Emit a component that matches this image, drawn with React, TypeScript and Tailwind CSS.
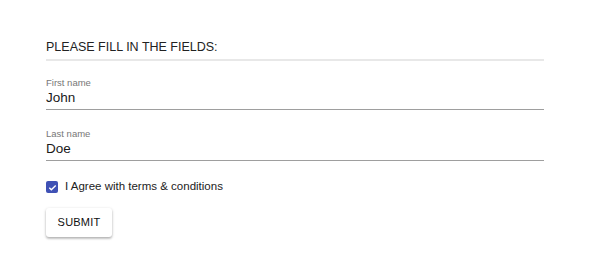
import { useState } from "react";

export default function App() {
  const [first, setFirst] = useState("John");
  const [last, setLast] = useState("Doe");
  const [agree, setAgree] = useState(true);

  return (
    <div className="h-[261px] w-[590px] bg-white" style={{ fontFamily: '"Liberation Sans", Arial, sans-serif' }}>
      <form className="ml-[46px] w-[498px] pt-[40px]" onSubmit={(e) => e.preventDefault()}>
        {/* Section heading */}
        <div className="border-b-2 border-[#e8e8e8] pb-[4px] text-[12.5px] leading-[15px] text-[#222]">
          PLEASE FILL IN THE FIELDS:
        </div>

        {/* First name */}
        <div className="mt-[16px] border-b border-[#9e9e9e]">
          <label className="block text-[9.5px] leading-[11px] text-[#777]">First name</label>
          <input
            value={first}
            onChange={(e) => setFirst(e.target.value)}
            className="block h-[21px] w-full bg-transparent pb-[2px] text-[13.5px] text-[#1a1a1a] outline-none"
          />
        </div>

        {/* Last name */}
        <div className="mt-[18px] border-b border-[#9e9e9e]">
          <label className="block text-[9.5px] leading-[11px] text-[#777]">Last name</label>
          <input
            value={last}
            onChange={(e) => setLast(e.target.value)}
            className="block h-[21px] w-full bg-transparent pb-[2px] text-[13.5px] text-[#1a1a1a] outline-none"
          />
        </div>

        {/* Terms */}
        <label className="mt-[19px] flex h-[14px] cursor-pointer items-center gap-[7px] text-[11.5px] text-[#222]">
          <button
            type="button"
            onClick={() => setAgree(!agree)}
            className={`flex h-[12px] w-[12px] items-center justify-center rounded-[2px] ${agree ? "bg-[#3f51b5]" : "border-2 border-[#757575]"}`}
          >
            {agree && (
              <svg viewBox="0 0 24 24" className="h-[11px] w-[11px]" fill="none" stroke="white" strokeWidth="3">
                <path d="M5 12.5l4.5 4.5L19 7.5" />
              </svg>
            )}
          </button>
          I Agree with terms &amp; conditions
        </label>

        {/* Submit */}
        <button
          type="submit"
          className="mt-[14px] h-[29px] w-[66px] rounded-[3px] bg-white text-[11px] font-medium tracking-[0.2px] text-[#111] shadow-[0_1px_3px_rgba(0,0,0,0.25),0_2px_2px_rgba(0,0,0,0.12)]"
        >
          SUBMIT
        </button>
      </form>
    </div>
  );
}
